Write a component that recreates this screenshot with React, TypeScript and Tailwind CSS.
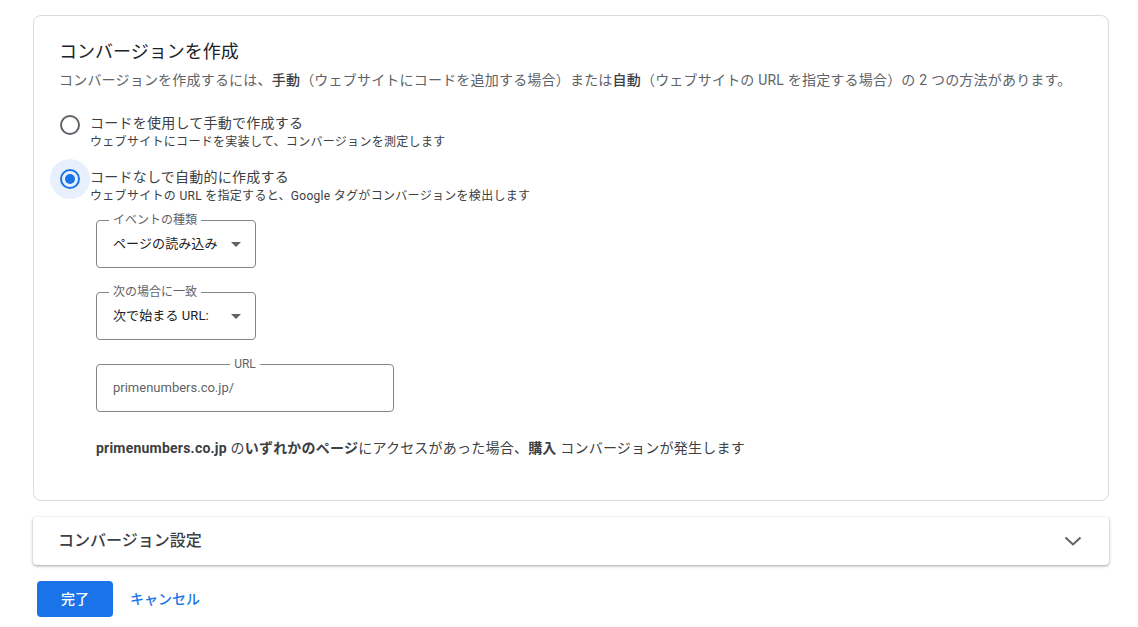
import { useState } from 'react'

const font = { fontFamily: 'Roboto, "Noto Sans CJK JP", sans-serif' }

type RadioProps = { checked: boolean; label: string; hint: string; onSelect: () => void }
function RadioOption({ checked, label, hint, onSelect }: RadioProps) {
	return (
		<button type="button" onClick={onSelect} className="flex items-start text-left">
			<span className="relative mt-[2px] ml-px flex size-5 shrink-0 items-center justify-center">
				{checked && (
					<span aria-hidden="true" className="absolute -inset-[10px] rounded-full bg-[#e8f0fe]" />
				)}
				<span
					className={
						checked
							? 'relative flex size-5 items-center justify-center rounded-full border-2 border-[#1a73e8]'
							: 'relative flex size-5 items-center justify-center rounded-full border-2 border-[#5f6368]'
					}
				>
					{checked && <span className="size-[10px] rounded-full bg-[#1a73e8]" />}
				</span>
			</span>
			<span className="ml-[10px] flex flex-col">
				<span className="text-[14px] leading-5 tracking-[0.25px] text-[#3c4043]">{label}</span>
				<span className="mt-px text-[12px] leading-4 tracking-[0.3px] text-[#3c4043]">{hint}</span>
			</span>
		</button>
	)
}

type SelectProps = { label: string; value: string }
function OutlinedSelect({ label, value }: SelectProps) {
	return (
		<div className="relative flex h-12 w-[160px] items-center justify-between rounded-[4px] border border-[#80868b] pr-[14px] pl-4">
			<span className="absolute -top-[9px] left-[12px] bg-white px-1 text-[12px] leading-4 text-[#5f6368]">
				{label}
			</span>
			<span className="text-[13px] tracking-[0.1px] text-[#202124]">{value}</span>
			<svg width="10" height="5" viewBox="0 0 10 5" aria-hidden="true">
				<path d="M0 0 L5 5 L10 0 Z" fill="#5f6368" />
			</svg>
		</div>
	)
}

export default function App() {
	const [mode, setMode] = useState<'manual' | 'auto'>('auto')

	return (
		<div className="min-h-screen bg-white pt-[15px] pr-[29px] pl-[33px]" style={font}>
			<section className="rounded-lg border border-[#dadce0] px-[25px] pt-[24px] pb-[42px]">
				<h2 className="text-[18px] leading-6 text-[#202124]">コンバージョンを作成</h2>
				<p className="mt-[6px] text-[14px] leading-5 tracking-[0.2px] text-[#5f6368]">
					コンバージョンを作成するには、<b className="font-medium text-[#3c4043]">手動</b>
					（ウェブサイトにコードを追加する場合）または<b className="font-medium text-[#3c4043]">自動</b>
					（ウェブサイトの URL を指定する場合）の 2 つの方法があります。
				</p>

				<div className="mt-[23px] flex flex-col gap-[17px]">
					<RadioOption
						checked={mode === 'manual'}
						onSelect={() => setMode('manual')}
						label="コードを使用して手動で作成する"
						hint="ウェブサイトにコードを実装して、コンバージョンを測定します"
					/>
					<RadioOption
						checked={mode === 'auto'}
						onSelect={() => setMode('auto')}
						label="コードなしで自動的に作成する"
						hint="ウェブサイトの URL を指定すると、Google タグがコンバージョンを検出します"
					/>
				</div>

				<div className="mt-[16px] ml-[37px] flex flex-col gap-6">
					<OutlinedSelect label="イベントの種類" value="ページの読み込み" />
					<OutlinedSelect label="次の場合に一致" value="次で始まる URL:" />
					<div className="relative flex h-12 w-[298px] items-center rounded-[4px] border border-[#80868b] px-4">
						<span className="absolute -top-[9px] left-1/2 -translate-x-1/2 bg-white px-1 text-[12px] leading-4 text-[#5f6368]">
							URL
						</span>
						<span className="text-[13px] text-[#5f6368]">primenumbers.co.jp/</span>
					</div>
					<p className="mt-[2px] text-[14px] leading-5 tracking-[0.22px] text-[#3c4043]">
						<b className="font-bold">primenumbers.co.jp</b> の<b className="font-bold">いずれかのページ</b>
						にアクセスがあった場合、<b className="font-bold">購入</b> コンバージョンが発生します
					</p>
				</div>
			</section>

			<section className="mt-[16px] flex h-12 items-center justify-between rounded-[4px] pr-[27px] pl-[25px] shadow-[0_1px_2px_0_rgba(60,64,67,0.3),0_1px_3px_1px_rgba(60,64,67,0.15)]">
				<h3 className="text-[16px] font-medium text-[#3c4043]">コンバージョン設定</h3>
				<svg width="18" height="10" viewBox="0 0 18 10" aria-hidden="true">
					<path d="M1.5 1.5 L9 8.5 L16.5 1.5" fill="none" stroke="#5f6368" strokeWidth="2" />
				</svg>
			</section>

			<div className="mt-4 flex items-center gap-[17px] pl-1">
				<button
					type="button"
					className="h-9 w-[76px] rounded-[4px] bg-[#1a73e8] text-[14px] font-medium text-white"
				>
					完了
				</button>
				<button type="button" className="text-[14px] font-medium text-[#1a73e8]">
					キャンセル
				</button>
			</div>
		</div>
	)
}
